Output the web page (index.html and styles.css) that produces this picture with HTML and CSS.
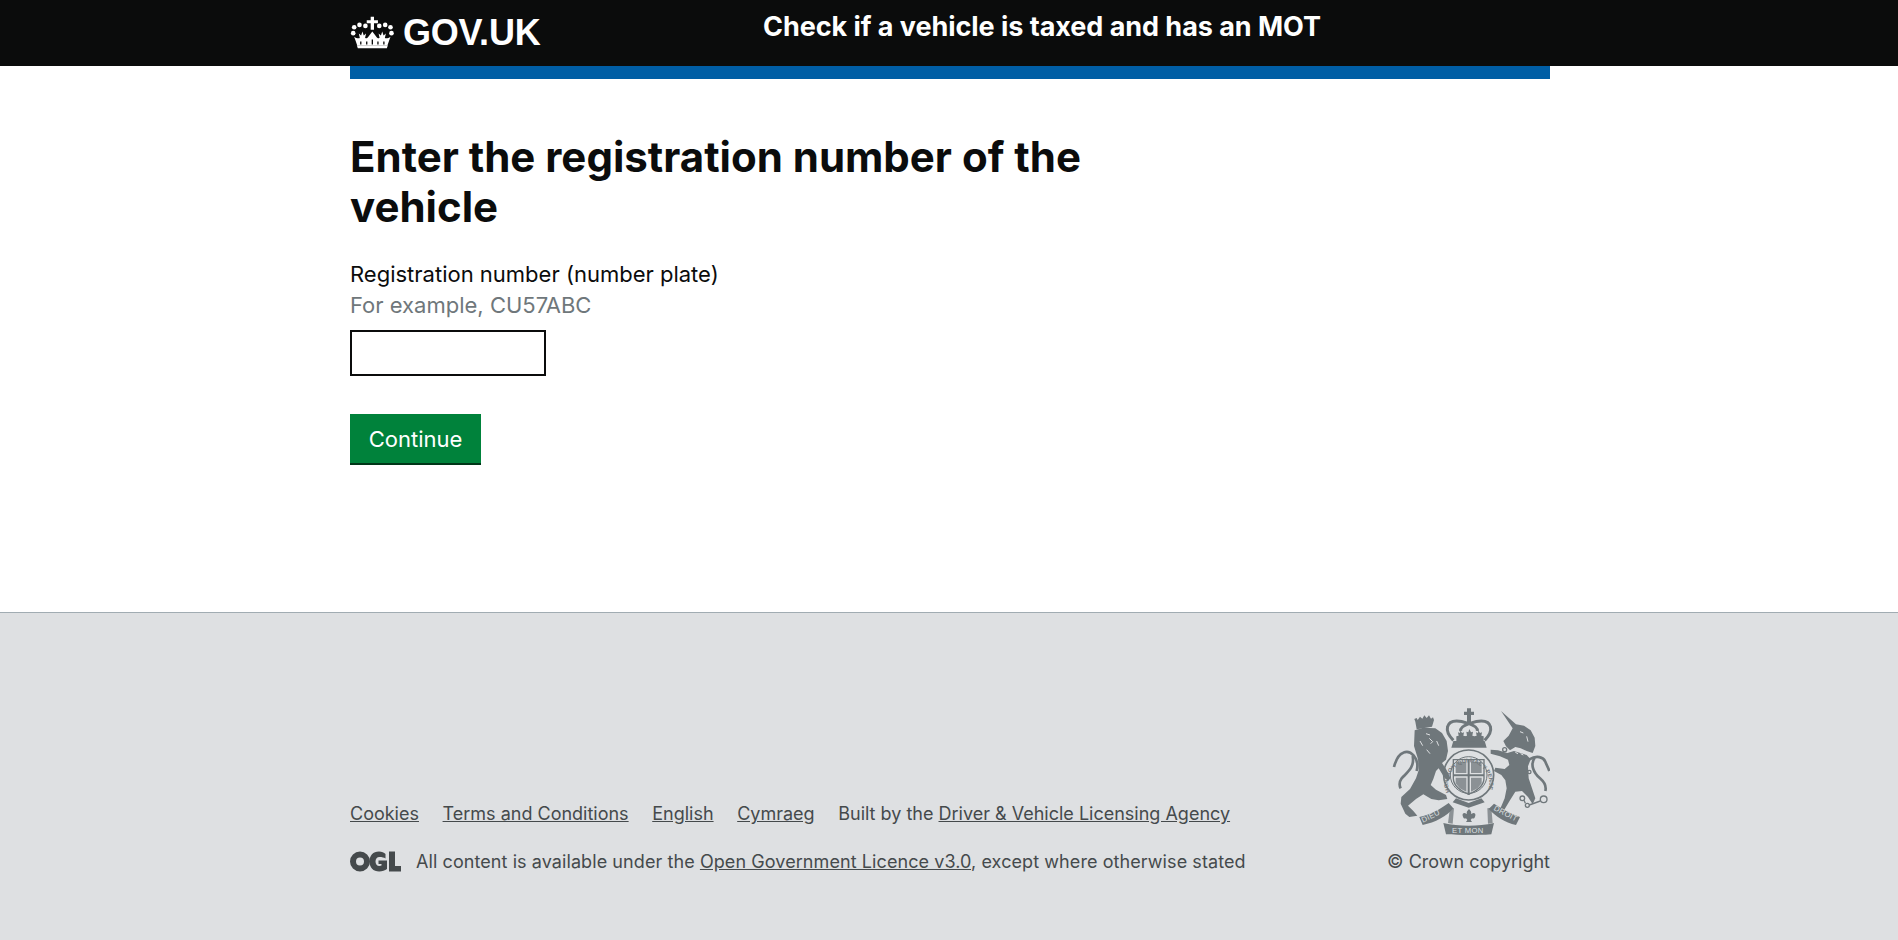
FILE: index.html
```html
<!DOCTYPE html>
<html lang="en">
<head>
<meta charset="utf-8">
<title>Check if a vehicle is taxed and has an MOT</title>
<link rel="stylesheet" href="styles.css">
</head>
<body>
<header class="site-header">
  <div class="header-inner">
    <a class="logo" href="#">
      <svg class="crown" viewBox="30 45 135 100" width="45" height="33" aria-hidden="true">
        <g fill="#fff">
          <path d="M92 47h10v11h12v9h-12v20h-10V67H80v-9h12z"/>
          <circle cx="42" cy="79" r="7"/><circle cx="58" cy="72" r="7"/><circle cx="76" cy="75" r="7"/>
          <circle cx="118" cy="75" r="7"/><circle cx="136" cy="72" r="7"/><circle cx="152" cy="79" r="7"/>
          <circle cx="39" cy="97" r="7"/><circle cx="155" cy="97" r="7"/>
          <path d="M42 108c6 4 12 6 17 4l-3-14 7 6 4-12 4 12 7-6-3 14c5 1 9-2 11-6l11-14 11 14c2 4 6 7 11 6l-3-14 7 6 4-12 4 12 7-6-3 14c5 2 11 0 17-4l-9 26H51z"/>
          <path d="M50 134h94l-3 9H53z"/>
        </g>
        <g fill="#0b0c0c">
          <path d="M60 122h4v9h-4zM78 122h4v9h-4zM95 116h4v15h-4zM112 122h4v9h-4zM130 122h4v9h-4z"/>
        </g>
      </svg>
      <span class="logo-text">GOV.UK</span>
    </a>
    <a class="service-name" href="#">Check if a vehicle is taxed and has an MOT</a>
  </div>
</header>
<div class="wrap">
  <div class="blue-bar"></div>
  <main class="main">
    <h1 class="heading">Enter the registration number of the vehicle</h1>
    <form class="form">
      <label class="label" for="reg">Registration number (number plate)</label>
      <span class="hint">For example, CU57ABC</span>
      <input class="input" id="reg" type="text">
      <button class="button" type="button">Continue</button>
    </form>
  </main>
</div>
<footer class="footer">
  <div class="footer-inner">
    <div class="footer-left">
      <ul class="footer-links">
        <li><a href="#">Cookies</a></li>
        <li><a href="#">Terms and Conditions</a></li>
        <li><a href="#">English</a></li>
        <li><a href="#">Cymraeg</a></li>
        <li>Built by the <a href="#">Driver &amp; Vehicle Licensing Agency</a></li>
      </ul>
      <div class="licence">
        <svg class="ogl" viewBox="0 0 51 21" width="51" height="21" aria-hidden="true">
          <g fill="#454a4c">
            <path fill-rule="evenodd" d="M10 .5a10 10 0 1 0 0 20 10 10 0 0 0 0-20zm0 6a4 4 0 1 1 0 8 4 4 0 0 1 0-8z"/>
            <path d="M29 .5c2.800 0 5 .9 6.500 2.500v4.500c-1.500-1-3.600-1.500-6-1.500-2.500 0-4 1.800-4 4.500s1.500 4.500 3.800 4.500c1 0 1.700-.2 2.200-.5v-1.500h-3V9.500h8.500v8.500c-2 1.600-4.700 2.500-7.800 2.500-6 0-9.700-4-9.700-10S23 .5 29 .5z"/>
            <path d="M39 .5h6V15h6v5.500H39z"/>
          </g>
        </svg>
        <span>All content is available under the <a href="#">Open Government Licence v3.0</a>, except where otherwise stated</span>
      </div>
    </div>
    <div class="footer-right">
      <svg class="crest" viewBox="60 45 480 396" width="160" height="132" aria-hidden="true">
        <defs>
          <path id="garter-arc" d="M241 305A62 62 0 1 1 351 305"/>
        </defs>
        <g class="crest-dark">
          <!-- lion crown -->
          <path d="M136 92l-3-8 7-3 3 6 7-10 7 6 6-10 7 8 7-8 6 10 6-4 3 8-6 20-46 8z"/>
          <!-- lion -->
          <path d="M134 118L160 110 196 112 216 126 230 150 234 180 228 206 216 216 228 234 242 262 234 270 222 258 206 232 198 240 190 264 182 282 198 296 228 312 232 324 206 328 184 324 160 310 138 324 114 344 130 360 142 374 118 378 106 368 92 338 94 318 120 294 138 262 146 238 144 205 132 165z"/>
          <!-- unicorn head -->
          <path d="M393 60L438 100 462 104 482 118 494 140 496 165 488 186 470 180 452 172 436 168 420 178 408 166 400 150 416 134 428 112z"/>
          <!-- unicorn body -->
          <path d="M432 180L470 192 482 205 474 226 476 262 486 292 496 322 488 340 474 318 456 300 436 302 420 328 402 358 392 350 404 322 410 292 406 268 394 252 372 240 376 230 404 234 418 222 414 206 390 196 362 188 362 176 384 178 412 186z"/>
        </g>
        <g class="crest-tail">
          <path d="M140 240C150 200 120 175 100 185 85 190 78 205 72 228"/>
          <path d="M128 195C135 230 110 245 95 262 88 272 86 280 92 292"/>
          <path d="M478 205C500 192 520 198 526 212 530 222 534 230 538 240"/>
          <path d="M494 200C480 220 490 245 510 262 525 275 530 285 526 300"/>
        </g>
        <g class="crest-line">
          <circle cx="457" cy="322" r="7"/><circle cx="521" cy="325" r="10"/><circle cx="472" cy="343" r="6"/>
          <circle cx="404" cy="176" r="6"/><circle cx="478" cy="243" r="5"/>
          <path d="M462 328l4 9M478 342l33-12"/>
        </g>
        <g class="crest-face">
          <path d="M168 128l12 4M178 142l10 10-6 6M150 150l8 14M170 176l10 12M200 150l6 14"/>
          <path d="M450 122l10 4M470 136l4 16M436 184l8 4M452 188l8 4"/>
        </g>
        <g class="crest-dark">
          <!-- royal crown -->
          <path d="M291 52h12v10h9v10h-9v22h-12V72h-9V62h9z"/>
          <path d="M250 150h94l6 20H244z"/>
          <path d="M271 118l5 8 6-2-2 10 7 2v14h-28v-14l7-2-2-10 6 2zM298 114l5 10 6-2-2 12 6 2v16h-28v-16l6-2-2-12 6 2zM325 118l5 8 6-2-2 10 7 2v14h-28v-14l7-2-2-10 6 2z"/>
        </g>
        <g class="crest-arch">
          <path d="M250 148c-30-30-20-58 10-58 18 0 30 6 37 8 7-2 19-8 37-8 30 0 40 28 10 58"/>
          <path d="M272 120c-2-10 8-16 25-22 17 6 27 12 25 22"/>
        </g>
        <!-- garter -->
        <circle class="crest-ring-outer" cx="296" cy="252" r="75"/>
        <circle class="crest-ring-inner" cx="296" cy="252" r="55"/>
        <text class="crest-garter"><textPath href="#garter-arc" startOffset="1%">HONI SOIT QUI MAL Y PENSE</textPath></text>
        <!-- shield -->
        <g class="crest-dark">
          <path fill-rule="evenodd" d="M248 204h96v58c0 24-22 40-48 50-26-10-48-26-48-50zm4 4v54c0 20 20 36 44 46 24-10 44-26 44-46v-54z"/>
          <path d="M293 204h6v108h-6zM250 250h92v6h-92z"/>
          <path class="crest-quarter" d="M257 212h32v34h-32zM303 212h32v34h-32zM257 260h32v42l-20-10-12-15zM303 260h32v17l-12 15-20 10z"/>
        </g>
        <!-- compartment -->
        <path class="crest-dark" d="M258 322l38 14 38-14 10 12-48 16-48-16z"/>
        <!-- fleur -->
        <path class="crest-dark" d="M297 354c6 6 8 10 6 15l7-3c6 0 8 5 5 11-1 5-6 7-9 5l-4 5 4 6h-18l4-6-4-5c-3 2-8 0-9-5-3-6-1-11 5-11l7 3c-2-5 0-9 6-15z"/>
        <!-- motto -->
        <g class="crest-dark">
          <path d="M148 378C180 372 210 355 236 336L250 352C232 375 195 395 158 402z"/>
          <path d="M372 338C395 352 420 368 450 378L438 402C405 395 375 375 356 354z"/>
          <path d="M220 396c24 6 50 8 76 8s52-2 76-8l-8 34c-22 2-44 2-68 2s-46 0-68-2z"/>
          <path class="crest-curl" d="M240 350l12 2-4 46-14-2zM352 352l12-2 4 46-14 2z"/>
        </g>
        <g class="crest-text">
          <text x="159" y="395" transform="rotate(-26 159 395)">DIEU</text>
          <text x="370" y="356" transform="rotate(28 370 356)">DROIT</text>
          <text x="246" y="427">ET MON</text>
        </g>
      </svg>
      <span class="copyright">© Crown copyright</span>
    </div>
  </div>
</footer>
</body>
</html>
```

FILE: styles.css
```css
* { box-sizing: border-box; }
html, body { margin: 0; padding: 0; }
body {
  font-family: Inter, "Noto Sans", sans-serif;
  color: #0b0c0c;
  background: #fff;
  min-height: 940px;
  display: flex;
  flex-direction: column;
}
a { color: inherit; }
.site-header { background: #0b0c0c; height: 66px; }
.header-inner {
  width: 1200px;
  margin-left: 350px;
  display: flex;
  color: #fff;
}
.logo {
  display: flex;
  align-items: center;
  gap: 8px;
  width: 413px;
  height: 66px;
  text-decoration: none;
}
.crown { margin-top: -2px; }
.logo-text {
  font-family: "Liberation Sans", Arial, sans-serif;
  font-weight: 700;
  font-size: 36px;
  letter-spacing: -.2px;
  line-height: 66px;
}
.service-name {
  font-weight: 700;
  font-size: 27px;
  letter-spacing: -.05px;
  line-height: 54px;
  text-decoration: none;
  white-space: nowrap;
}
.wrap { width: 1200px; margin-left: 350px; }
.blue-bar { height: 13px; background: #005ea5; }
.main { padding-top: 53px; height: 533px; }
.heading {
  margin: 0 0 27px;
  width: 780px;
  font-size: 42px;
  line-height: 50px;
  font-weight: 700;
}
.form { display: flex; flex-direction: column; align-items: flex-start; }
.label { font-size: 22px; line-height: 31px; }
.hint { font-size: 22px; line-height: 31px; color: #6f777b; }
.input {
  width: 196px;
  height: 46px;
  margin-top: 9px;
  border: 2px solid #0b0c0c;
  background: #fff;
}
.button {
  margin-top: 38px;
  width: 131px;
  height: 51px;
  border: 0;
  border-bottom: 2px solid #003618;
  background: #00823b;
  color: #fff;
  font: inherit;
  font-size: 22px;
  padding: 0;
}
.footer {
  flex: 1;
  background: #dee0e2;
  border-top: 1px solid #a1acb2;
  color: #454a4c;
  font-size: 18px;
}
.footer-inner {
  width: 1200px;
  margin-left: 350px;
  height: 327px;
  padding-bottom: 68px;
  display: flex;
  justify-content: space-between;
  align-items: flex-end;
}
.footer-left { white-space: nowrap; }
.footer-links {
  list-style: none;
  margin: 0 0 27px;
  padding: 0;
  display: flex;
  gap: 23.6px;
}
.licence { display: flex; align-items: center; gap: 15px; letter-spacing: .08px; }
.footer-right { display: flex; flex-direction: column; align-items: flex-end; gap: 13px; }
.crest { display: block; }
.crest-dark { fill: #6f777b; }
.crest-quarter { opacity: .75; }
.crest-curl { opacity: .75; }
.crest-line { fill: none; stroke: #6f777b; stroke-width: 4; }
.crest-tail { fill: none; stroke: #6f777b; stroke-width: 8; }
.crest-face { fill: none; stroke: #dee0e2; stroke-width: 3; }
.crest-arch { fill: none; stroke: #6f777b; stroke-width: 9; }
.crest-ring-outer { fill: none; stroke: #6f777b; stroke-width: 5; }
.crest-ring-inner { fill: none; stroke: #6f777b; stroke-width: 3; }
.crest-garter { font-family: "Liberation Sans", sans-serif; font-size: 17px; font-weight: 700; fill: #6f777b; }
.crest-text { font-family: "Liberation Sans", sans-serif; font-size: 23px; fill: #dee0e2; letter-spacing: 1px; }
```
